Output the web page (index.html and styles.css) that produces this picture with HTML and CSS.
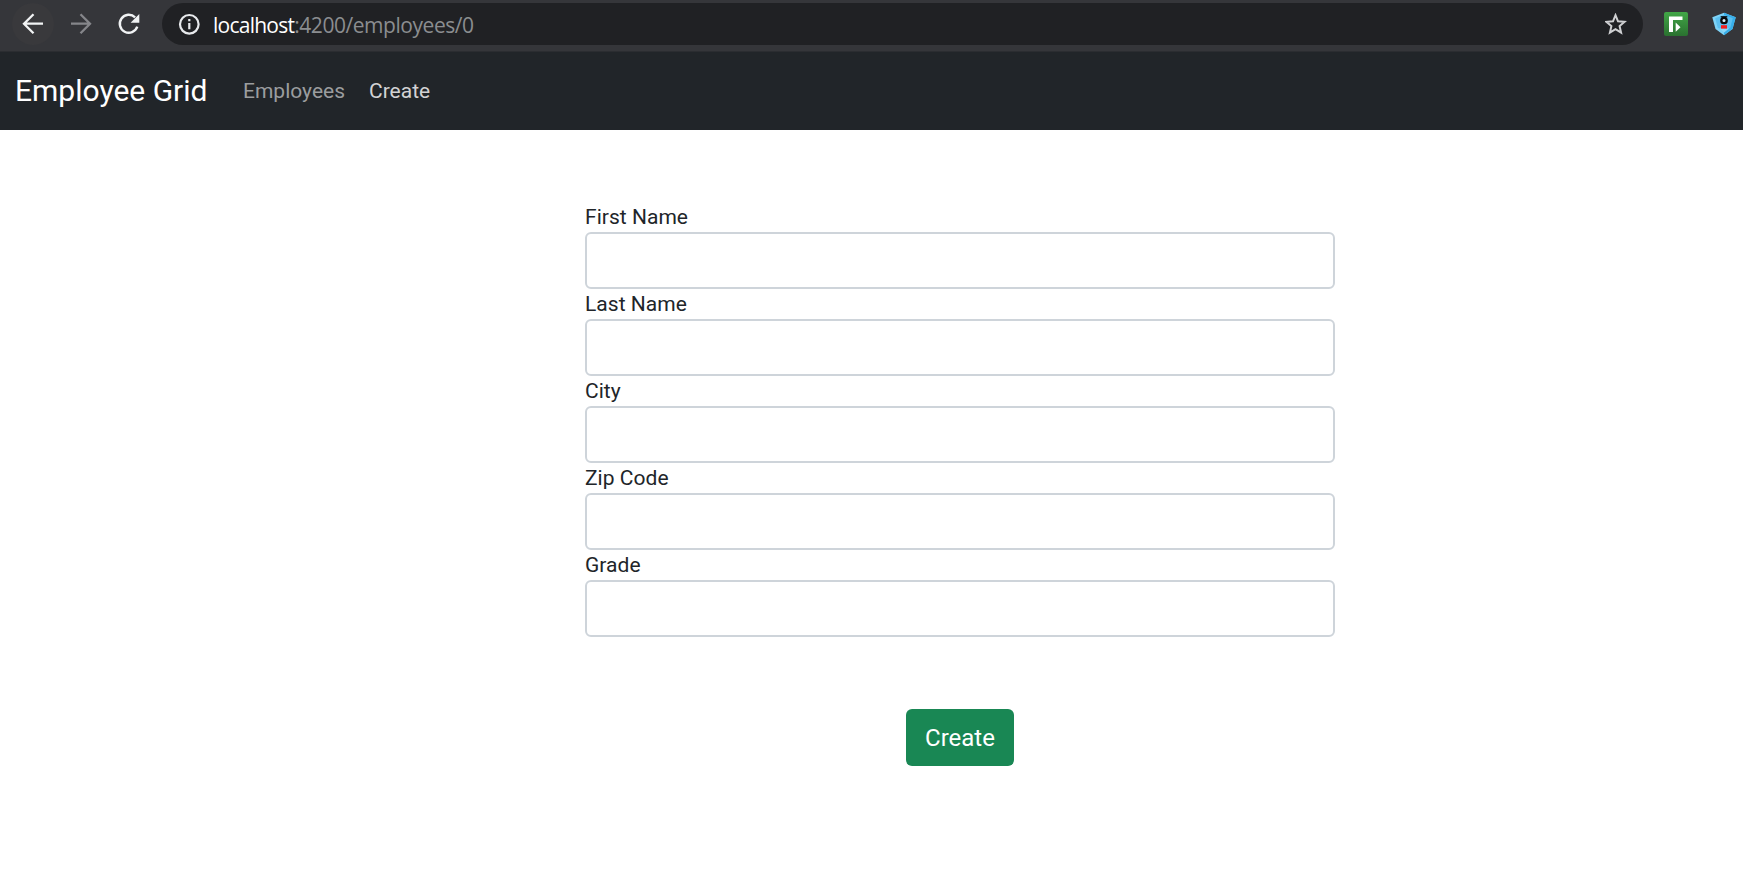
FILE: index.html
```html
<!DOCTYPE html>
<html lang="en">
<head>
<meta charset="utf-8">
<title>Employee Grid</title>
<link rel="stylesheet" href="styles.css">
</head>
<body>
<div class="toolbar">
  <span class="tool back"><svg width="42" height="42" viewBox="0 0 42 42"><path d="M31 20.7H12M21.5 11.2L12 20.7l9.5 9.5" fill="none" stroke="#f1f3f4" stroke-width="2.3"/></svg></span>
  <span class="tool"><svg width="42" height="42" viewBox="0 0 42 42"><path d="M11 20.7h19M20.500 11.200L30 20.700l-9.500 9.500" fill="none" stroke="#85868a" stroke-width="2.300"/></svg></span>
  <span class="tool"><svg width="42" height="42" viewBox="0 0 42 42"><path d="M29.300 23.700A9 9 0 1 1 27.100 14.300" fill="none" stroke="#f1f3f4" stroke-width="2.400"/><path d="M31.300 11v8.700h-8.700z" fill="#f1f3f4"/></svg></span>
  <div class="address">
    <svg class="info" width="22" height="22" viewBox="0 0 22 22"><circle cx="11.300" cy="11.300" r="9.300" fill="none" stroke="#e8eaed" stroke-width="2.200"/><path d="M11.300 10v6.300M11.300 6v2.300" stroke="#e8eaed" stroke-width="2.200"/></svg>
    <div class="url"><span class="host">localhost</span><span class="path">:4200/employees/0</span></div>
    <svg class="star" width="22" height="22" viewBox="0 0 22 22"><path d="M10.500 2.200l2.500 6.100 6.600.5-5 4.300 1.500 6.500-5.600-3.500-5.600 3.500 1.500-6.500-5-4.300 6.600-.5z" fill="none" stroke="#cfd0d2" stroke-width="2"/></svg>
  </div>
  <svg class="ext" width="24" height="24" viewBox="0 0 24 24"><defs><linearGradient id="leaf" x2="0" y2="1"><stop stop-color="#42a647"/><stop offset="1" stop-color="#2a7130"/></linearGradient></defs><rect width="24" height="24" rx="2" fill="url(#leaf)"/><path d="M5 4.500h13.500V8H9v12H5z" fill="#fff"/><path d="M11.700 10.500l4.800 4.700-4.800 4.600z" fill="#fff"/></svg>
  <svg class="shield" width="24" height="24" viewBox="0 0 24 24"><path d="M12 .7L23.700 5.300l-3.200 11.700L12 23.300 3.500 17 .3 5.300z" fill="#7ed3f7"/><path d="M12 .7L23.700 5.300l-3.200 11.700L12 23.300z" fill="#37aeea"/><path d="M12 2.800l8.800 3.500-2.500 9.200L12 20.500l-6.300-5L3.200 6.300z" fill="#5cc0f0"/><path d="M12 16.600l5 0-5 3.900-5-3.900z" fill="#8fd9f8"/><circle cx="12" cy="8.500" r="2.700" fill="#d9f0fa" stroke="#080b0d" stroke-width="2.300"/><path d="M8.700 4.800h6.600" stroke="#080b0d" stroke-width="1.300"/><rect x="9" y="13.200" width="6" height="3.400" fill="#f51d1d"/></svg>
</div>
<nav class="navbar">
  <a class="brand">Employee Grid</a>
  <a class="link">Employees</a>
  <a class="link active">Create</a>
</nav>
<main>
  <form class="form">
    <label class="label" for="first">First Name</label><input class="field" id="first" type="text">
    <label class="label" for="last">Last Name</label><input class="field" id="last" type="text">
    <label class="label" for="city">City</label><input class="field" id="city" type="text">
    <label class="label" for="zip">Zip Code</label><input class="field" id="zip" type="text">
    <label class="label" for="grade">Grade</label><input class="field" id="grade" type="text">
    <button class="submit" type="button">Create</button>
  </form>
</main>
</body>
</html>
```
FILE: styles.css
```css
* { box-sizing: border-box; }
body { margin: 0; background: #fff; font-family: Roboto, sans-serif; color: #212529; overflow: hidden; }
.toolbar { display: flex; height: 51px; padding: 3px 0 0 12px; background: #35363a; }
.tool { width: 42px; height: 42px; margin-right: 6px; border-radius: 50%; }
.tool svg, .address svg { display: block; }
.back { background: #39393c; }
.address { display: flex; align-items: center; width: 1481px; height: 42px; margin-left: 6px; padding: 0 16px 0 16px; border-radius: 21px; background: #202124; }
.info { margin-right: 13px; }
.url { flex: 1; padding-top: 1px; font: 21px/28px "Open Sans", sans-serif; white-space: nowrap; }
.host { color: #fff; letter-spacing: -0.75px; }
.path { color: #8b8d90; letter-spacing: -0.45px; }
.ext { margin: 9px 0 0 21px; }
.shield { margin: 9px 0 0 24px; }
.navbar { display: flex; align-items: center; height: 79px; padding-left: 15px; background: #212529; border-top: 1px solid #2b2d31; }
.brand { width: 216px; padding-bottom: 2px; color: #fff; font-size: 30px; line-height: 45px; }
.link { padding: 0 12px; color: #9b9d9f; font-size: 21px; line-height: 32px; }
.active { color: #d3d3d4; }
.form { display: flex; flex-direction: column; width: 750px; margin: 72px 0 0 585px; }
.label { height: 30px; font-size: 21px; line-height: 30px; letter-spacing: 0.03px; }
.field { width: 750px; height: 57px; margin: 0; padding: 9px 18px; border: 2px solid #ced4da; border-radius: 6px; background: #fff; font: 24px Roboto, sans-serif; }
.submit { align-self: center; width: 108px; height: 57px; margin-top: 72px; padding: 0; border: 0; border-radius: 6px; background: #198754; color: #fff; font: 24px/36px Roboto, sans-serif; }
```
